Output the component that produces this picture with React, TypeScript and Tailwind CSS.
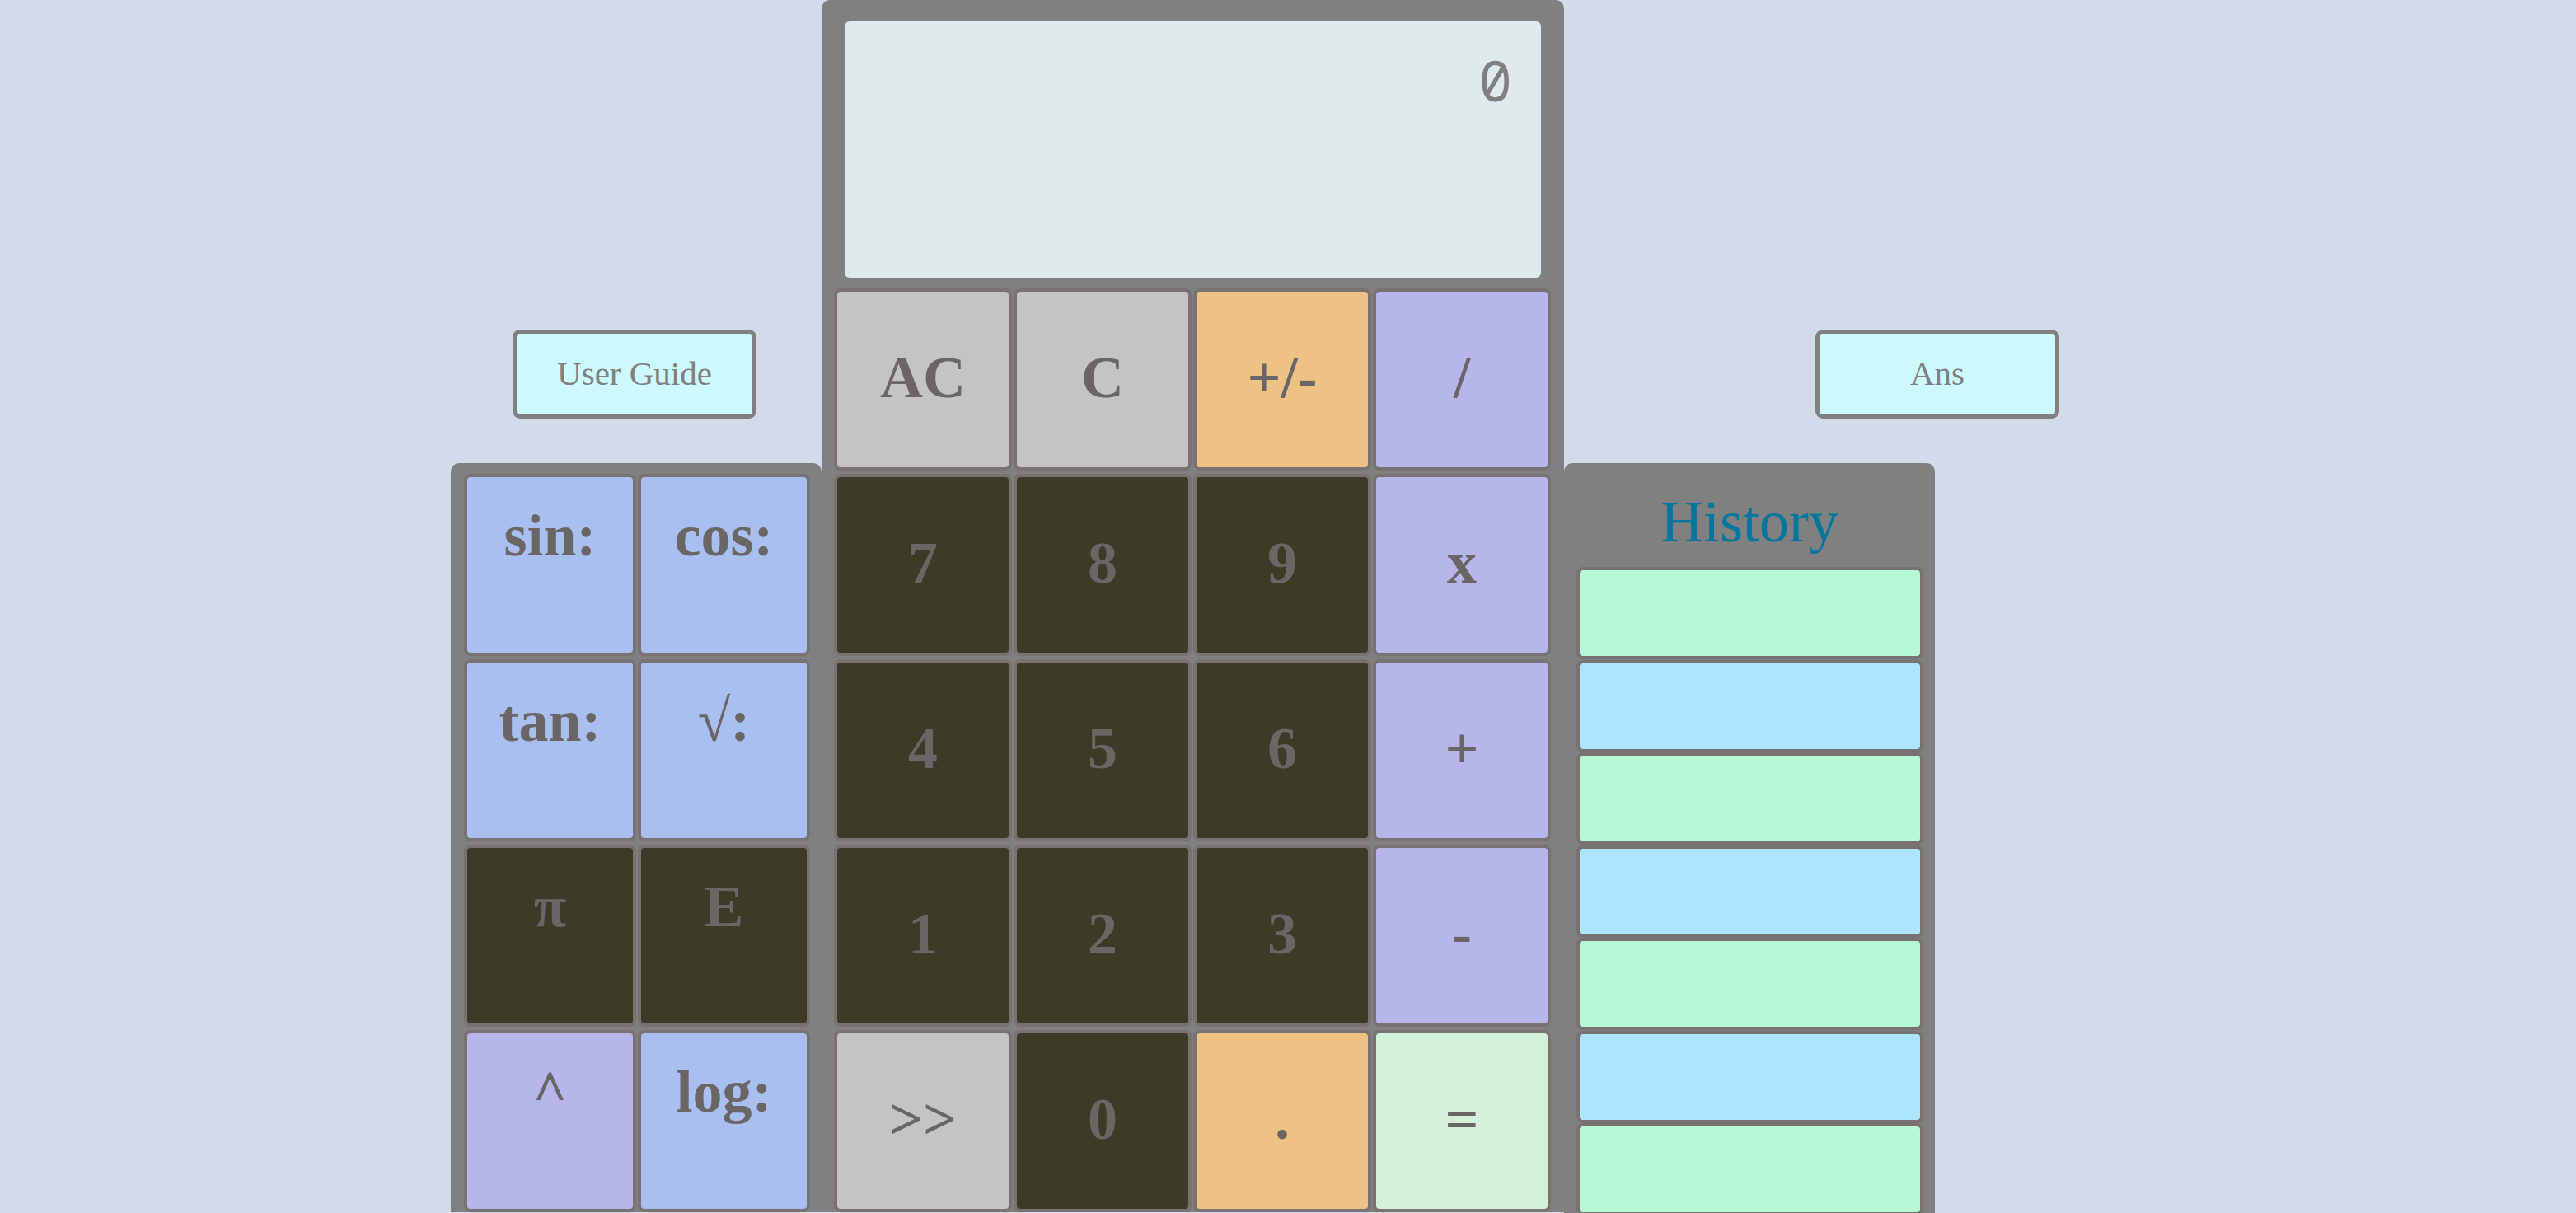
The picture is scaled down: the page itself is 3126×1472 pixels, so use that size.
import React from 'react';

const keys = [
  { label: 'AC', bg: 'bg-[#c4c4c4]' },
  { label: 'C', bg: 'bg-[#c4c4c4]' },
  { label: '+/-', bg: 'bg-[#eec185]' },
  { label: '/', bg: 'bg-[#b6b6eb]' },
  { label: '7', bg: 'bg-[#3d3b28]' },
  { label: '8', bg: 'bg-[#3d3b28]' },
  { label: '9', bg: 'bg-[#3d3b28]' },
  { label: 'x', bg: 'bg-[#b6b6eb]' },
  { label: '4', bg: 'bg-[#3d3b28]' },
  { label: '5', bg: 'bg-[#3d3b28]' },
  { label: '6', bg: 'bg-[#3d3b28]' },
  { label: '+', bg: 'bg-[#b6b6eb]' },
  { label: '1', bg: 'bg-[#3d3b28]' },
  { label: '2', bg: 'bg-[#3d3b28]' },
  { label: '3', bg: 'bg-[#3d3b28]' },
  { label: '-', bg: 'bg-[#b6b6eb]' },
  { label: '>>', bg: 'bg-[#c4c4c4]' },
  { label: '0', bg: 'bg-[#3d3b28]' },
  { label: '.', bg: 'bg-[#eec185]' },
  { label: '=', bg: 'bg-[#d3f0d8]' },
];

const sciKeys = [
  { label: 'sin:', bg: 'bg-[#a9bfef]' },
  { label: 'cos:', bg: 'bg-[#a9bfef]' },
  { label: 'tan:', bg: 'bg-[#a9bfef]' },
  { label: '√:', bg: 'bg-[#a9bfef]' },
  { label: 'π', bg: 'bg-[#3d3b28]' },
  { label: 'E', bg: 'bg-[#3d3b28]' },
  { label: '^', bg: 'bg-[#b6b6eb]' },
  { label: 'log:', bg: 'bg-[#a9bfef]' },
];

const history = ['bg-[#b7f9d6]', 'bg-[#ade5ff]', 'bg-[#b7f9d6]', 'bg-[#ade5ff]', 'bg-[#b7f9d6]', 'bg-[#ade5ff]', 'bg-[#b7f9d6]'];

const serif = "font-['Liberation_Serif',serif]";

export default function App() {
  return (
    <div className={`min-h-screen bg-[#d3daea] ${serif}`}>
      <div className="flex items-start pl-[547px]">
        {/* left column */}
        <div className="w-[450px] pt-[400px]">
          <button className="ml-[75px] w-[296px] h-[108px] bg-[#ccf9ff] border-[5px] border-[#808080] rounded-[9px] text-[41px] text-[#808080]">
            User Guide
          </button>
          <div className="mt-[54px] bg-[#808080] rounded-t-[10px] pt-[13px] pl-[16px] pr-[14px]">
            <div className="grid grid-cols-2 gap-x-[2px] gap-y-[4px]">
              {sciKeys.map((k) => (
                <button
                  key={k.label}
                  className={`${k.bg} h-[221px] border-4 border-[#787272] rounded-[8px] flex items-start justify-center pt-[35px] text-[72px] leading-none font-bold text-[#6b6666]`}
                >
                  {k.label}
                </button>
              ))}
            </div>
          </div>
        </div>

        {/* calculator */}
        <div className="w-[901px] bg-[#808080] rounded-t-[10px] pt-[26px]">
          <div className="mx-[28px] h-[311px] bg-[#e0eaec] rounded-[6px] flex items-start justify-end pr-[35px] pt-[37px]">
            <span className="font-['Noto_Sans_Mono',monospace] text-[68px] leading-none text-[#808080]">0</span>
          </div>
          <div className="mt-[13px] pl-[15px] pr-[16px] grid grid-cols-4 gap-x-[2px] gap-y-[4px]">
            {keys.map((k) => (
              <button
                key={k.label}
                className={`${k.bg} h-[221px] border-4 border-[#787272] rounded-[8px] flex items-center justify-center pb-[6px] text-[72px] leading-none font-bold text-[#6b6666]`}
              >
                {k.label}
              </button>
            ))}
          </div>
        </div>

        {/* right column */}
        <div className="w-[601px] pt-[400px]">
          <button className="ml-[305px] w-[296px] h-[108px] bg-[#ccf9ff] border-[5px] border-[#808080] rounded-[9px] text-[41px] text-[#808080]">
            Ans
          </button>
          <div className="mt-[54px] w-[450px] bg-[#808080] rounded-t-[10px]">
            <div className="h-[126px] pt-[32px] text-center text-[72px] leading-[1.107] text-[#00779e]">History</div>
            <div className="pl-[15px] pr-[14px] flex flex-col gap-[0.5px]">
              {history.map((bg, i) => (
                <div key={i} className={`${bg} h-[112px] border-4 border-[#787272] rounded-[8px]`} />
              ))}
            </div>
          </div>
        </div>
      </div>
    </div>
  );
}
